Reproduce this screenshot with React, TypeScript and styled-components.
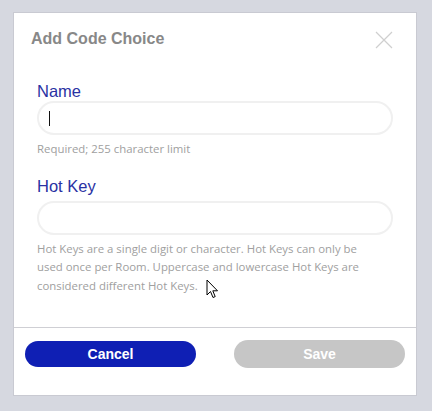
import React from 'react'
import styled, { createGlobalStyle } from 'styled-components'

const GlobalStyle = createGlobalStyle`
  html, body {
    margin: 0;
    padding: 0;
    background: #d6d8e0;
    font-family: "Liberation Sans", Arial, sans-serif;
  }
`

const Page = styled.div`
  width: 432px;
  height: 411px;
  padding: 12px 0 0 13px;
  box-sizing: border-box;
  position: relative;
  overflow: hidden;
`

const Modal = styled.div`
  width: 404px;
  height: 384px;
  box-sizing: border-box;
  background: #fff;
  border: 1px solid #c9cad2;
  display: flex;
  flex-direction: column;
`

const Header = styled.div`
  height: 55px;
  box-sizing: border-box;
  padding: 16px 22px 0 17px;
  display: flex;
  justify-content: space-between;
  align-items: flex-start;
`

const Title = styled.h2`
  margin: 0;
  font-size: 16px;
  line-height: 20px;
  font-weight: bold;
  color: #888;
`

const CloseButton = styled.button`
  width: 20px;
  height: 20px;
  padding: 0;
  margin-top: 1px;
  border: none;
  background: none;
  display: flex;
  align-items: center;
  justify-content: center;
`

const Body = styled.div`
  flex: 1;
  padding: 0 23px;
`

const Label = styled.label<{ $top: number; $gap: number }>`
  display: block;
  margin-top: ${p => p.$top}px;
  margin-bottom: ${p => p.$gap}px;
  font-size: 16.5px;
  line-height: 20px;
  color: #2a32a3;
`

const TextInput = styled.div`
  height: 34px;
  box-sizing: border-box;
  border: 2px solid #f0f0f0;
  border-radius: 17px;
  padding: 0 10px;
  display: flex;
  align-items: center;
`

const Caret = styled.span`
  width: 1px;
  height: 15px;
  background: #111;
`

const Help = styled.p`
  margin: 5px 0 0;
  padding-right: 14px;
  font-family: "Open Sans", "Noto Sans", sans-serif;
  font-size: 11.4px;
  line-height: 18.5px;
  color: #a0a0a0;
`

const Footer = styled.div`
  height: 68px;
  box-sizing: border-box;
  border-top: 1px solid #cfcfd4;
  padding: 12px 11px 0;
  display: flex;
  justify-content: space-between;
  align-items: flex-start;
`

const Button = styled.button<{ $primary?: boolean }>`
  width: 171px;
  height: ${p => (p.$primary ? 26 : 28)}px;
  margin-top: ${p => (p.$primary ? 1 : 0)}px;
  border: none;
  border-radius: 14px;
  background: ${p => (p.$primary ? '#0f1fb4' : '#c6c6c6')};
  color: #fff;
  font-family: "Liberation Sans", Arial, sans-serif;
  font-weight: bold;
  font-size: 14px;
  padding: 0;
`

const Pointer = styled.svg`
  position: absolute;
  left: 206px;
  top: 279px;
`

export default function App() {
  return (
    <Page>
      <GlobalStyle />
      <Modal>
        <Header>
          <Title>Add Code Choice</Title>
          <CloseButton aria-label="close">
            <svg width="18" height="18" viewBox="0 0 18 18">
              <path d="M1 1 L17 17 M17 1 L1 17" stroke="#cfcfcf" strokeWidth="1.2" />
            </svg>
          </CloseButton>
        </Header>
        <Body>
          <Label $top={13} $gap={0}>Name</Label>
          <TextInput>
            <Caret />
          </TextInput>
          <Help>Required; 255 character limit</Help>
          <Label $top={17} $gap={5}>Hot Key</Label>
          <TextInput />
          <Help>
            Hot Keys are a single digit or character. Hot Keys can only be used once per Room. Uppercase
            and lowercase Hot Keys are considered different Hot Keys.
          </Help>
        </Body>
        <Footer>
          <Button $primary>Cancel</Button>
          <Button>Save</Button>
        </Footer>
      </Modal>
      <Pointer width="13" height="20" viewBox="0 0 13 20">
        <path d="M1 1 L1 16 L4.5 12.5 L7 18.5 L9.2 17.6 L6.8 11.8 L11.5 11.8 Z" fill="#fff" stroke="#000" strokeWidth="1" strokeLinejoin="round" />
      </Pointer>
    </Page>
  )
}
